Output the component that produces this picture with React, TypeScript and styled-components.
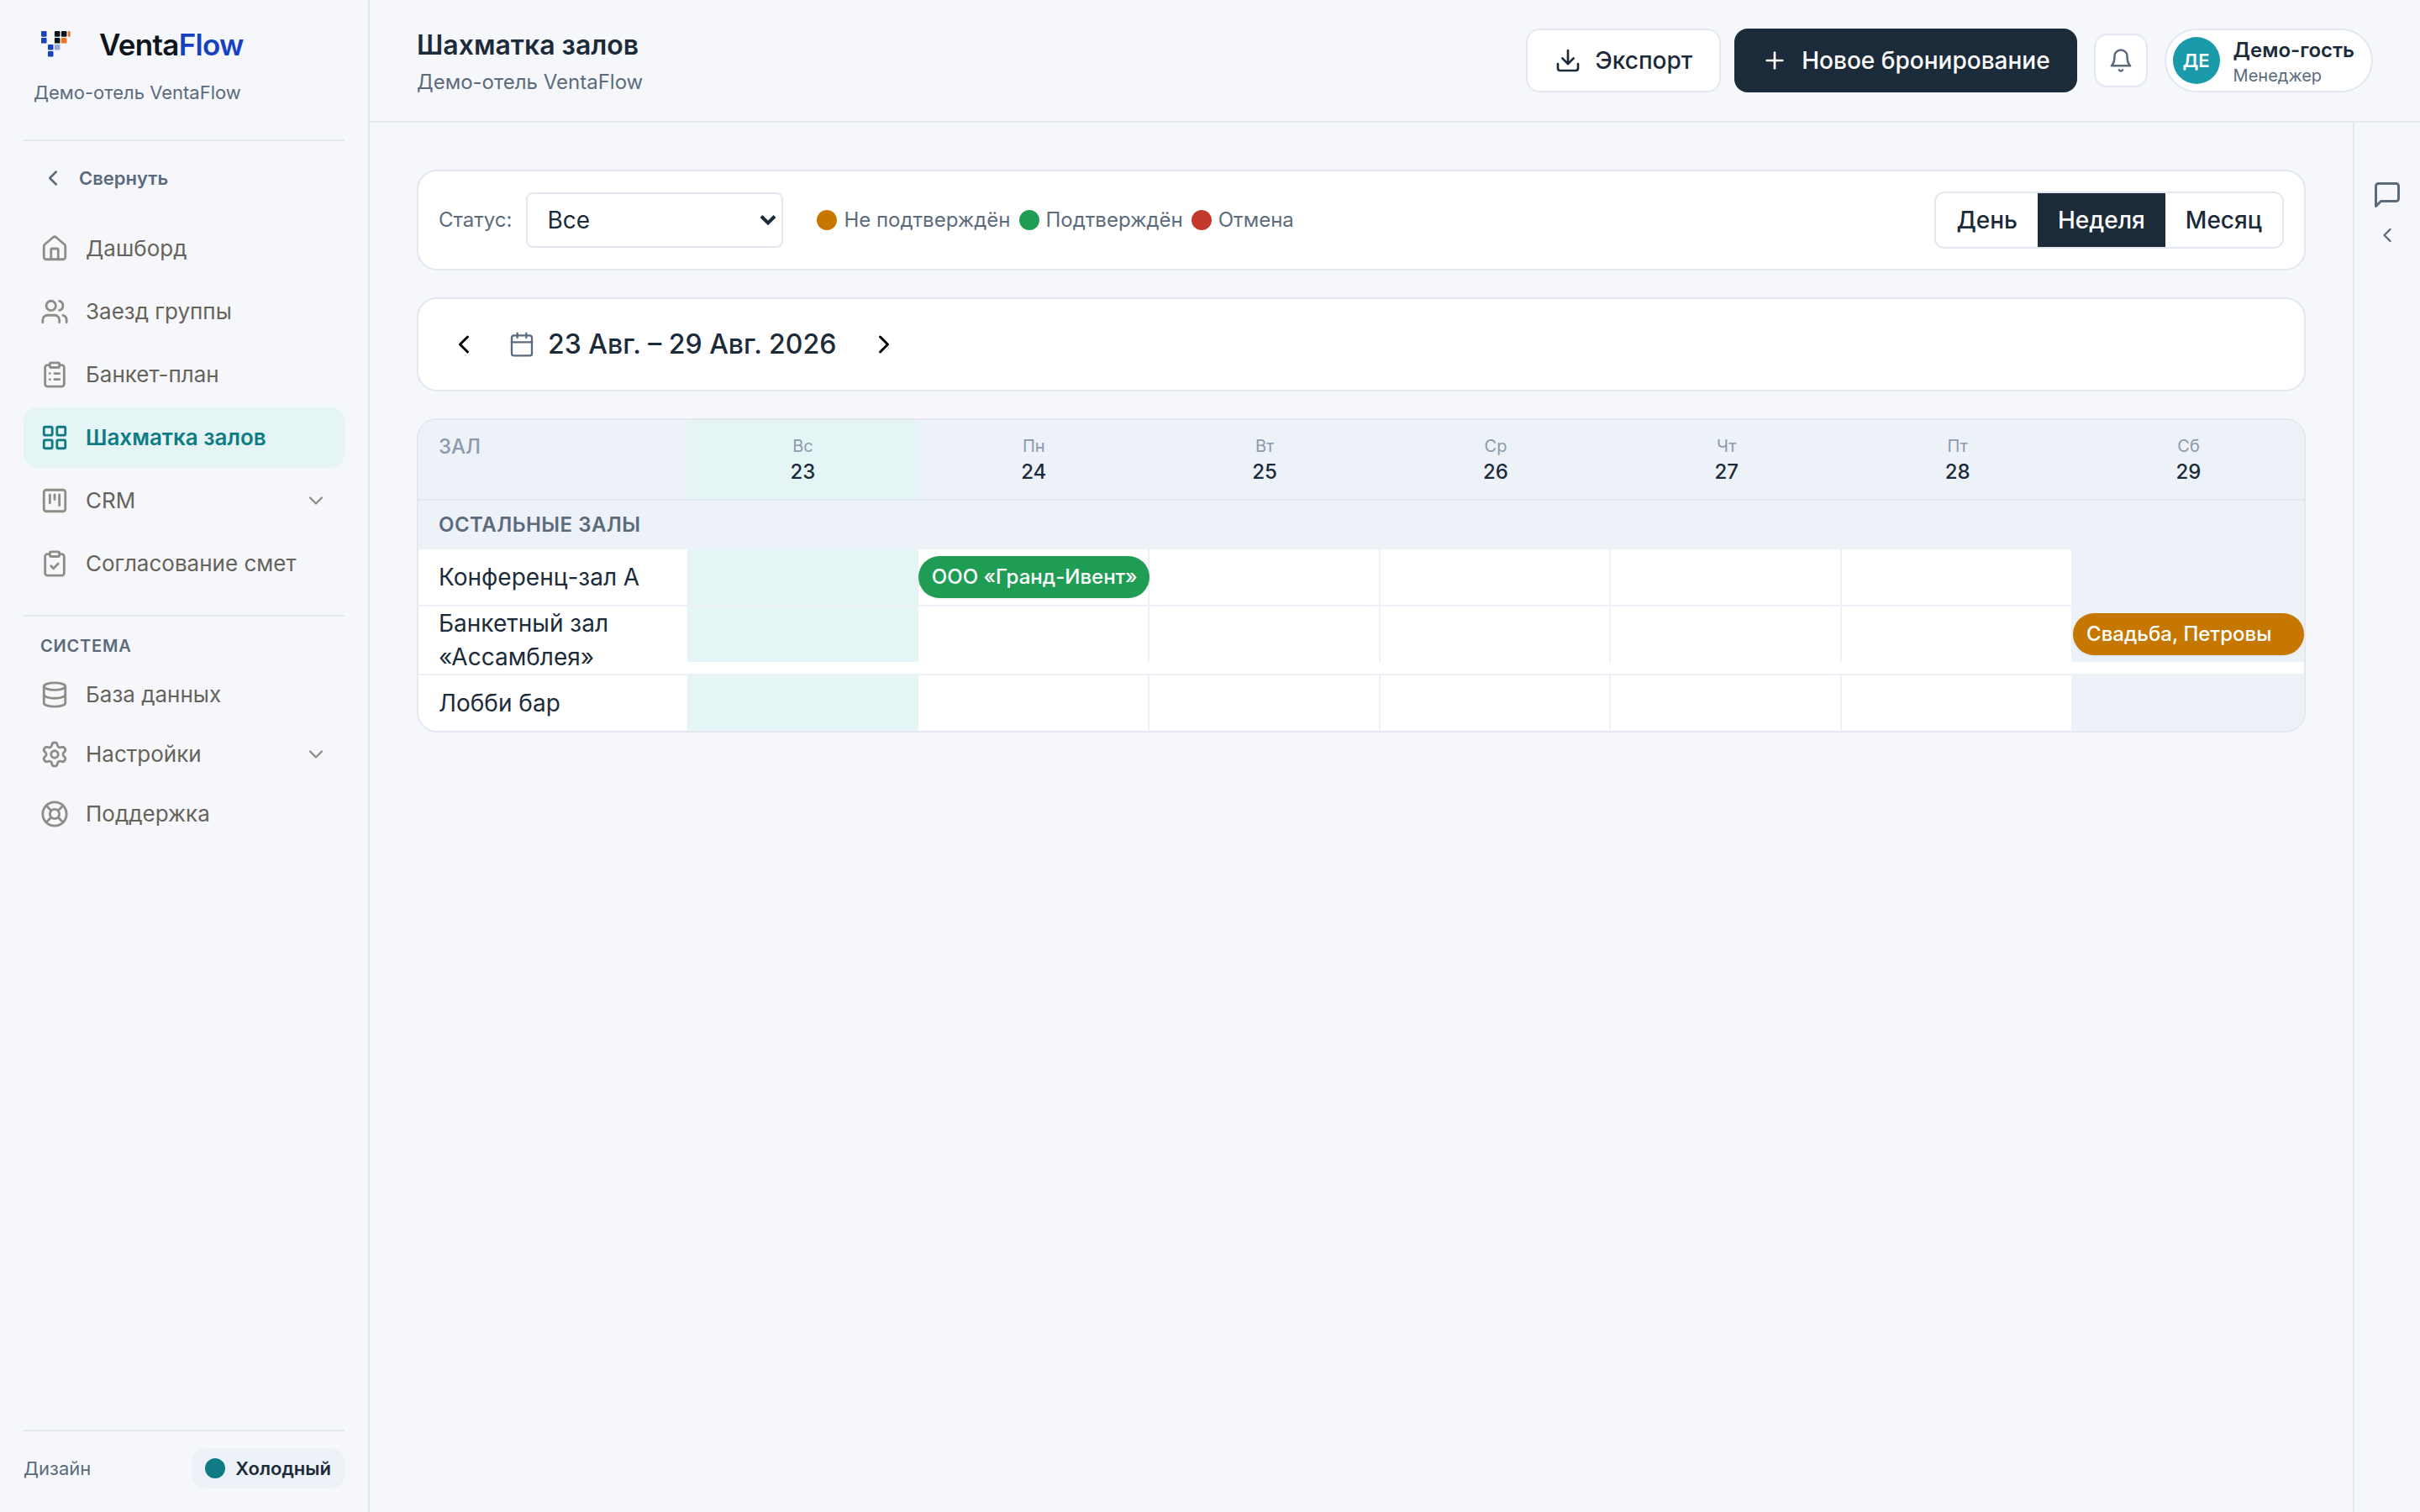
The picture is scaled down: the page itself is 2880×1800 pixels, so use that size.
import React from "react";
import styled, { createGlobalStyle } from "styled-components";
import {
  Calendar,
  ChevronDown,
  ChevronLeft,
  ChevronRight,
  ClipboardCheck,
  ClipboardList,
  Database,
  Download,
  House,
  LayoutGrid,
  LifeBuoy,
  Plus,
  Settings,
  SquareKanban,
  Users,
  type LucideIcon,
} from "lucide-react";

const c = {
  page: "#f5f7fb",
  card: "#ffffff",
  line: "#e2e7f0",
  sideLine: "#e0e8ec",
  soft: "#edf1f8",
  ink: "#1c2b3a",
  muted: "#5b6b7c",
  faint: "#8b9bab",
  nav: "#66635b",
  navIcon: "#8f8d88",
  teal: "#0f7c85",
  tealSoft: "#e5f4f5",
  avatar: "#1b9aaa",
  pending: "#c67700",
  confirmed: "#1f9d55",
  cancelled: "#c0392b",
};

const GlobalStyle = createGlobalStyle`
  *, *::before, *::after { box-sizing: border-box; }
  body {
    margin: 0;
    background: ${c.page};
    color: ${c.ink};
    font-family: Inter, "Noto Sans", sans-serif;
    font-size: 28px;
    line-height: 40px;
  }
  button, select { font: inherit; color: inherit; }
  button { cursor: pointer; }
`;

const Shell = styled.div`
  display: grid;
  grid-template-columns: 440px minmax(0, 1fr);
  min-height: 100vh;
`;

const Sidebar = styled.aside`
  display: flex;
  flex-direction: column;
  padding: 28px;
  border-right: 2px solid ${c.sideLine};
`;

const Brand = styled.div`
  padding: 0 12px 40px;
  border-bottom: 2px solid ${c.sideLine};
`;

const BrandLink = styled.a`
  display: flex;
  align-items: center;
  gap: 25px;
  height: 50px;
  padding-left: 9px;
  color: #10141c;
  font-size: 35px;
  font-weight: 600;
  letter-spacing: -0.02em;
  text-decoration: none;
`;

const BrandAccent = styled.span`
  color: #1741c0;
`;

const BrandNote = styled.p`
  margin: 16px 0 0;
  color: ${c.muted};
  font-size: 22px;
  line-height: 32px;
`;

const Collapse = styled.button`
  display: flex;
  align-items: center;
  gap: 16px;
  height: 56px;
  margin: 16px 0 20px;
  padding: 0 20px;
  border: 0;
  background: none;
  color: ${c.muted};
  font-size: 22px;
  font-weight: 600;
`;

const NavList = styled.ul<{ $gap: number }>`
  display: grid;
  gap: ${(p) => p.$gap}px;
  margin: 0;
  padding: 0;
  list-style: none;
`;

const NavLink = styled.a<{ $active?: boolean; $compact?: boolean }>`
  display: flex;
  align-items: center;
  gap: 20px;
  height: ${(p) => (p.$compact ? 71 : 72)}px;
  padding: 0 20px;
  border-radius: 16px;
  background: ${(p) => (p.$active ? c.tealSoft : "transparent")};
  color: ${(p) => (p.$active ? c.teal : c.nav)};
  font-size: 26px;
  font-weight: ${(p) => (p.$active ? 600 : 400)};
  text-decoration: none;

  svg { flex: none; color: ${(p) => (p.$active ? c.teal : c.navIcon)}; }
`;

const NavText = styled.span`
  flex: 1;
`;

const NavSection = styled.section`
  margin-top: 25px;
  padding-top: 19px;
  border-top: 2px solid ${c.line};
`;

const NavHeading = styled.h2`
  margin: 0 0 6px;
  padding: 0 20px;
  color: ${c.muted};
  font-size: 20px;
  font-weight: 600;
  line-height: 32px;
  letter-spacing: 0.04em;
  text-transform: uppercase;
`;

const SideFooter = styled.div`
  display: flex;
  align-items: center;
  justify-content: space-between;
  margin-top: auto;
  padding-top: 20px;
  border-top: 2px solid ${c.sideLine};
  color: ${c.muted};
  font-size: 22px;
`;

const ThemeButton = styled.button`
  display: flex;
  align-items: center;
  gap: 12px;
  height: 48px;
  padding: 0 16px;
  border: 0;
  border-radius: 16px;
  background: ${c.soft};
  color: ${c.ink};
  font-size: 22px;
  font-weight: 600;
`;

const Dot = styled.span<{ $color: string }>`
  flex: none;
  width: 24px;
  height: 24px;
  border-radius: 50%;
  background: ${(p) => p.$color};
`;

const Workspace = styled.div`
  display: flex;
  flex-direction: column;
`;

const TopBar = styled.header`
  display: flex;
  align-items: center;
  justify-content: space-between;
  height: 146px;
  padding: 0 56px;
  border-bottom: 2px solid ${c.line};
`;

const Title = styled.h1`
  margin: 0;
  font-size: 32px;
  font-weight: 600;
  line-height: 52px;
`;

const Subtitle = styled.p`
  margin: 0;
  color: ${c.muted};
  font-size: 24px;
  line-height: 36px;
`;

const Actions = styled.div`
  display: flex;
  align-items: center;
  gap: 20px;
`;

const ButtonPair = styled.div`
  display: flex;
  gap: 16px;
`;

const ActionButton = styled.button<{ $primary?: boolean }>`
  display: flex;
  align-items: center;
  gap: 16px;
  height: 76px;
  padding: 0 32px;
  border: ${(p) => (p.$primary ? "0" : `2px solid ${c.line}`)};
  border-radius: 16px;
  background: ${(p) => (p.$primary ? c.ink : c.card)};
  color: ${(p) => (p.$primary ? "#ffffff" : c.ink)};
  font-weight: 500;
`;

const BellButton = styled.button`
  display: grid;
  place-items: center;
  width: 64px;
  height: 64px;
  padding: 0;
  border: 2px solid ${c.line};
  border-radius: 16px;
  background: ${c.card};
  color: ${c.muted};
`;

const UserButton = styled.button`
  display: flex;
  align-items: center;
  gap: 16px;
  height: 76px;
  padding: 0 20px 0 8px;
  border: 2px solid ${c.line};
  border-radius: 38px;
  background: ${c.card};
  text-align: left;
`;

const Avatar = styled.span`
  display: grid;
  place-items: center;
  width: 56px;
  height: 56px;
  border-radius: 50%;
  background: ${c.avatar};
  color: #ffffff;
  font-size: 22px;
  font-weight: 600;
`;

const UserText = styled.span`
  display: grid;
`;

const UserName = styled.span`
  font-size: 24px;
  font-weight: 600;
  line-height: 36px;
`;

const UserRole = styled.span`
  color: ${c.muted};
  font-size: 20px;
  line-height: 24px;
`;

const Body = styled.div`
  display: grid;
  flex: 1;
  grid-template-columns: minmax(0, 1fr) 80px;
`;

const Content = styled.main`
  display: flex;
  flex-direction: column;
  gap: 32px;
  padding: 56px;
`;

const Rail = styled.aside`
  display: flex;
  flex-direction: column;
  align-items: center;
  gap: 16px;
  padding-top: 68px;
  border-left: 2px solid ${c.line};
`;

const RailButton = styled.button`
  display: grid;
  padding: 0;
  border: 0;
  background: none;
  color: ${c.muted};
`;

const Card = styled.section`
  display: flex;
  align-items: center;
  padding: 24px;
  border: 2px solid ${c.line};
  border-radius: 24px;
  background: ${c.card};
`;

const FilterLabel = styled.label`
  margin-right: 17px;
  color: ${c.muted};
  font-size: 24px;
`;

const SelectBox = styled.div`
  display: grid;
  align-items: center;
  width: 306px;

  & > * { grid-area: 1 / 1; }
  svg { justify-self: end; margin-right: 8px; pointer-events: none; }
`;

const StatusSelect = styled.select`
  width: 100%;
  height: 66px;
  padding: 0 23px;
  border: 2px solid ${c.line};
  border-radius: 8px;
  background: ${c.card};
  appearance: none;
`;

const Legend = styled.ul`
  display: flex;
  gap: 10px;
  margin: 0 auto 0 40px;
  padding: 0;
  list-style: none;
  color: ${c.muted};
  font-size: 24px;
`;

const LegendItem = styled.li`
  display: flex;
  align-items: center;
  gap: 8px;
`;

const Segments = styled.div`
  display: flex;
  height: 68px;
  overflow: hidden;
  border: 2px solid ${c.line};
  border-radius: 12px;
`;

const Segment = styled.button<{ $active: boolean }>`
  padding: 0 24px;
  border: 0;
  background: ${(p) => (p.$active ? c.ink : c.card)};
  color: ${(p) => (p.$active ? "#ffffff" : c.ink)};
  font-weight: 500;
`;

const StepButton = styled.button`
  display: grid;
  place-items: center;
  width: 60px;
  height: 60px;
  padding: 0;
  border: 0;
  background: none;
  color: #000000;
`;

const Range = styled.div`
  display: flex;
  align-items: center;
  gap: 15px;
  margin: 0 27px 0 23px;
  font-size: 32px;
  font-weight: 500;

  svg { color: ${c.muted}; }
`;

const Board = styled.div`
  overflow: hidden;
  border: 2px solid ${c.line};
  border-radius: 24px;
  background: ${c.card};
`;

const Grid = styled.table`
  width: 100%;
  border-spacing: 0;
  table-layout: fixed;

  th, td { padding: 0; }
`;

const HallHead = styled.th`
  && { padding: 16px 24px; }
  width: 320px;
  border-bottom: 2px solid ${c.line};
  background: ${c.soft};
  color: ${c.faint};
  font-size: 24px;
  font-weight: 500;
  line-height: 32px;
  text-align: left;
  vertical-align: top;
`;

const DayHead = styled.th<{ $today: boolean }>`
  && { padding: 16px 0; }
  border-bottom: 2px solid ${c.line};
  background: ${(p) => (p.$today ? c.tealSoft : c.soft)};
  font-size: 24px;
  font-weight: 500;
  line-height: 32px;
`;

const Weekday = styled.span`
  display: block;
  color: ${c.faint};
  font-size: 20px;
  font-weight: 400;
  line-height: 30px;
`;

const GroupHead = styled.th`
  && { padding: 0 24px; }
  height: 58px;
  background: ${c.soft};
  color: ${c.muted};
  font-size: 24px;
  font-weight: 600;
  letter-spacing: 0.02em;
  text-align: left;
  text-transform: uppercase;
`;

const HallRow = styled.tr`
  &:not(:last-child) > * { border-bottom: 2px solid ${c.soft}; }
`;

const HallName = styled.th`
  && { padding: 0 24px; }
  font-weight: 400;
  text-align: left;
`;

const DayCell = styled.td`
  vertical-align: top;
`;

type DayKind = "today" | "weekend" | "plain";

const slotFill = { today: c.tealSoft, weekend: c.soft, plain: c.card };
const slotEdge = { today: c.tealSoft, weekend: c.soft, plain: c.soft };

const Slot = styled.div<{ $kind: DayKind }>`
  position: relative;
  height: 66px;
  border-right: 2px solid ${(p) => slotEdge[p.$kind]};
  background: ${(p) => slotFill[p.$kind]};
`;

const Booking = styled.button<{ $color: string }>`
  position: absolute;
  inset: 8px -2px 8px 0;
  z-index: 1;
  overflow: hidden;
  padding: 0 16px;
  border: 0;
  border-radius: 25px;
  background: ${(p) => p.$color};
  box-shadow: 0 1px 3px rgba(28, 43, 58, 0.08);
  color: #ffffff;
  font-size: 24px;
  font-weight: 500;
  text-align: left;
  white-space: nowrap;
`;

const logoCells: [number, number, number, string][] = [
  [0, 0, 14, "#1741c0"],
  [0, 1, 14, "#1741c0"],
  [1, 2, 14, "#1741c0"],
  [1, 3, 14, "#1741c0"],
  [2, 0, 14, "#10141c"],
  [3, 0, 14, "#10141c"],
  [2, 1, 14, "#10141c"],
  [3, 1, 14, "#f26f21"],
  [2, 2, 14, "#97a8e0"],
  [4, 0, 6, "#f26f21"],
];

function Logo() {
  return (
    <svg width="44" height="32" viewBox="0 0 94 68" aria-hidden="true">
      {logoCells.map(([x, y, w, fill]) => (
        <rect key={`${x}-${y}`} x={x * 17} y={y * 17} width={w} height={14} rx={2} fill={fill} />
      ))}
    </svg>
  );
}

const stroke = {
  viewBox: "0 0 24 24",
  fill: "none",
  stroke: "currentColor",
  strokeLinecap: "round",
  strokeLinejoin: "round",
  "aria-hidden": true,
} as const;

function MessageIcon() {
  return (
    <svg width="36" height="36" strokeWidth="2" {...stroke}>
      <path d="M21 15a2 2 0 0 1-2 2H7l-4 4V5a2 2 0 0 1 2-2h14a2 2 0 0 1 2 2z" />
    </svg>
  );
}

function BellIcon() {
  return (
    <svg width="30" height="30" strokeWidth="2" {...stroke}>
      <path d="M6 8a6 6 0 0 1 12 0c0 7 3 9 3 9H3s3-2 3-9" />
      <path d="M10.3 21a1.94 1.94 0 0 0 3.4 0" />
    </svg>
  );
}

type NavItem = { label: string; icon: LucideIcon; active?: boolean; nested?: boolean };

const mainNav: NavItem[] = [
  { label: "Дашборд", icon: House },
  { label: "Заезд группы", icon: Users },
  { label: "Банкет-план", icon: ClipboardList },
  { label: "Шахматка залов", icon: LayoutGrid, active: true },
  { label: "CRM", icon: SquareKanban, nested: true },
  { label: "Согласование смет", icon: ClipboardCheck },
];

const systemNav: NavItem[] = [
  { label: "База данных", icon: Database },
  { label: "Настройки", icon: Settings, nested: true },
  { label: "Поддержка", icon: LifeBuoy },
];

function Nav({ items, gap, compact }: { items: NavItem[]; gap: number; compact?: boolean }) {
  return (
    <NavList $gap={gap}>
      {items.map(({ label, icon: Icon, active, nested }) => (
        <li key={label}>
          <NavLink href="#" $active={active} $compact={compact} aria-current={active ? "page" : undefined}>
            <Icon size={34} strokeWidth={2} />
            <NavText>{label}</NavText>
            {nested && <ChevronDown size={28} strokeWidth={2} />}
          </NavLink>
        </li>
      ))}
    </NavList>
  );
}

const legend = [
  { label: "Не подтверждён", color: c.pending },
  { label: "Подтверждён", color: c.confirmed },
  { label: "Отмена", color: c.cancelled },
];

const days: { name: string; date: number; kind: DayKind }[] = [
  { name: "Вс", date: 23, kind: "today" },
  { name: "Пн", date: 24, kind: "plain" },
  { name: "Вт", date: 25, kind: "plain" },
  { name: "Ср", date: 26, kind: "plain" },
  { name: "Чт", date: 27, kind: "plain" },
  { name: "Пт", date: 28, kind: "plain" },
  { name: "Сб", date: 29, kind: "weekend" },
];

const halls: { name: string; booking?: { date: number; title: string; color: string } }[] = [
  { name: "Конференц-зал А", booking: { date: 24, title: "ООО «Гранд-Ивент»", color: c.confirmed } },
  { name: "Банкетный зал «Ассамблея»", booking: { date: 29, title: "Свадьба, Петровы", color: c.pending } },
  { name: "Лобби бар" },
];

export default function App() {
  const [view, setView] = React.useState("Неделя");

  return (
    <>
      <GlobalStyle />
      <Shell>
        <Sidebar>
          <Brand>
            <BrandLink href="#">
              <Logo />
              <span>
                Venta<BrandAccent>Flow</BrandAccent>
              </span>
            </BrandLink>
            <BrandNote>Демо-отель VentaFlow</BrandNote>
          </Brand>
          <Collapse type="button">
            <ChevronLeft size={30} strokeWidth={2} />
            Свернуть
          </Collapse>
          <nav>
            <Nav items={mainNav} gap={3} />
            <NavSection>
              <NavHeading>Система</NavHeading>
              <Nav items={systemNav} gap={0} compact />
            </NavSection>
          </nav>
          <SideFooter>
            Дизайн
            <ThemeButton type="button">
              <Dot $color={c.teal} />
              Холодный
            </ThemeButton>
          </SideFooter>
        </Sidebar>

        <Workspace>
          <TopBar>
            <div>
              <Title>Шахматка залов</Title>
              <Subtitle>Демо-отель VentaFlow</Subtitle>
            </div>
            <Actions>
              <ButtonPair>
                <ActionButton type="button">
                  <Download size={32} strokeWidth={2} />
                  Экспорт
                </ActionButton>
                <ActionButton type="button" $primary>
                  <Plus size={32} strokeWidth={2} />
                  Новое бронирование
                </ActionButton>
              </ButtonPair>
              <BellButton type="button" aria-label="Уведомления">
                <BellIcon />
              </BellButton>
              <UserButton type="button">
                <Avatar>ДЕ</Avatar>
                <UserText>
                  <UserName>Демо-гость</UserName>
                  <UserRole>Менеджер</UserRole>
                </UserText>
              </UserButton>
            </Actions>
          </TopBar>

          <Body>
            <Content>
              <Card>
                <FilterLabel htmlFor="status">Статус:</FilterLabel>
                <SelectBox>
                  <StatusSelect id="status" defaultValue="Все">
                    <option>Все</option>
                    {legend.map((item) => (
                      <option key={item.label}>{item.label}</option>
                    ))}
                  </StatusSelect>
                  <svg width="20" height="14" viewBox="0 0 20 14" fill="none" stroke={c.ink} strokeWidth="4" aria-hidden="true">
                    <path d="M2 2.5 10 10.5 18 2.5" />
                  </svg>
                </SelectBox>
                <Legend>
                  {legend.map((item) => (
                    <LegendItem key={item.label}>
                      <Dot $color={item.color} />
                      {item.label}
                    </LegendItem>
                  ))}
                </Legend>
                <Segments>
                  {["День", "Неделя", "Месяц"].map((name) => (
                    <Segment
                      key={name}
                      type="button"
                      $active={view === name}
                      aria-pressed={view === name}
                      onClick={() => setView(name)}
                    >
                      {name}
                    </Segment>
                  ))}
                </Segments>
              </Card>

              <Card>
                <StepButton type="button" aria-label="Предыдущая неделя">
                  <ChevronLeft size={36} strokeWidth={2} />
                </StepButton>
                <Range>
                  <Calendar size={32} strokeWidth={1.75} />
                  23 Авг. – 29 Авг. 2026
                </Range>
                <StepButton type="button" aria-label="Следующая неделя">
                  <ChevronRight size={36} strokeWidth={2} />
                </StepButton>
              </Card>

              <Board>
                <Grid>
                  <thead>
                    <tr>
                      <HallHead scope="col">ЗАЛ</HallHead>
                      {days.map((day) => (
                        <DayHead key={day.date} scope="col" $today={day.kind === "today"}>
                          <Weekday>{day.name}</Weekday>
                          {day.date}
                        </DayHead>
                      ))}
                    </tr>
                  </thead>
                  <tbody>
                    <tr>
                      <GroupHead colSpan={8} scope="colgroup">
                        Остальные залы
                      </GroupHead>
                    </tr>
                    {halls.map(({ name, booking }) => (
                      <HallRow key={name}>
                        <HallName scope="row">{name}</HallName>
                        {days.map((day) => (
                          <DayCell key={day.date}>
                            <Slot $kind={day.kind}>
                              {booking?.date === day.date && (
                                <Booking type="button" $color={booking.color}>
                                  {booking.title}
                                </Booking>
                              )}
                            </Slot>
                          </DayCell>
                        ))}
                      </HallRow>
                    ))}
                  </tbody>
                </Grid>
              </Board>
            </Content>
            <Rail>
              <RailButton type="button" aria-label="Открыть чат">
                <MessageIcon />
              </RailButton>
              <RailButton type="button" aria-label="Развернуть панель">
                <ChevronLeft size={28} strokeWidth={2} />
              </RailButton>
            </Rail>
          </Body>
        </Workspace>
      </Shell>
    </>
  );
}
